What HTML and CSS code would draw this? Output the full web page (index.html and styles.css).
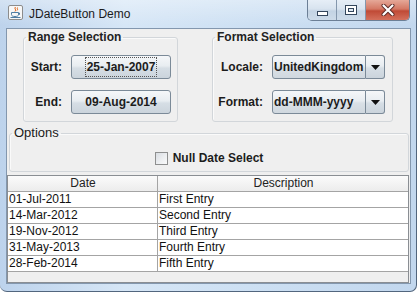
FILE: index.html
```html
<!DOCTYPE html>
<html>
<head>
    <meta charset="utf-8" />
    <title>JDateButton Demo</title>
    <link rel="stylesheet" href="styles.css">
</head>

<body>
    <div class="window">
        <header class="titlebar">
            <svg class="app-icon" width="15" height="15" viewBox="0 0 15 15">
                <rect x="0.5" y="0.5" width="14" height="14" rx="1.5" fill="#f7f7f7" stroke="#8c8c8c"/>
                <path d="M7.5 2 C5.5 3.5 9 4.5 7 6.5" stroke="#e0661a" fill="none"/>
                <path d="M9.5 2.5 C8.5 3.5 10.5 4.5 9 5.5" stroke="#e0661a" fill="none"/>
                <path d="M3.5 7.5 H10.5 V9.5 C10.5 11 9 11.5 7 11.5 C5 11.5 3.5 11 3.5 9.5 Z" fill="none" stroke="#4f7da3"/>
                <path d="M10.5 8 H11.5 V9.5 H10.5" fill="none" stroke="#4f7da3"/>
                <path d="M2.5 12.5 H12.5" stroke="#4f7da3"/>
            </svg>
            <span class="title">JDateButton Demo</span>
            <div class="caption-buttons">
                <div class="cap cap-min">
                    <svg width="11" height="5" viewBox="0 0 11 5"><rect x="0.5" y="0.5" width="10" height="4" fill="#fff" stroke="#34465c"/></svg>
                </div>
                <div class="cap cap-max">
                    <svg width="12" height="10" viewBox="0 0 12 10">
                        <rect x="0.5" y="0.5" width="11" height="9" fill="#fff" stroke="#34465c"/>
                        <rect x="3.5" y="3.5" width="5" height="3" fill="#dfe8f2" stroke="#34465c"/>
                    </svg>
                </div>
                <div class="cap cap-close">
                    <svg width="14" height="12" viewBox="0 0 14 12">
                        <path d="M2.5 1.5 L11.5 10.5 M11.5 1.5 L2.5 10.5" stroke="#5b2a26" stroke-width="4" stroke-linecap="round"/>
                        <path d="M2.5 1.5 L11.5 10.5 M11.5 1.5 L2.5 10.5" stroke="#fff" stroke-width="2.2" stroke-linecap="round"/>
                    </svg>
                </div>
            </div>
        </header>

        <main class="client">
            <div class="top-row">
                <fieldset class="group range-group">
                    <legend>Range Selection</legend>
                    <div class="form-grid">
                        <label>Start:</label>
                        <button class="date-btn"><span class="focus-ring">25-Jan-2007</span></button>
                        <label>End:</label>
                        <button class="date-btn">09-Aug-2014</button>
                    </div>
                </fieldset>
                <fieldset class="group format-group">
                    <legend>Format Selection</legend>
                    <div class="form-grid format-grid">
                        <label>Locale:</label>
                        <div class="combo">
                            <span class="combo-value">UnitedKingdom</span>
                            <span class="combo-arrow"><svg width="9" height="5" viewBox="0 0 9 5"><path d="M0 0 H9 L4.5 5 Z" fill="#111"/></svg></span>
                        </div>
                        <label>Format:</label>
                        <div class="combo">
                            <span class="combo-value">dd-MMM-yyyy</span>
                            <span class="combo-arrow"><svg width="9" height="5" viewBox="0 0 9 5"><path d="M0 0 H9 L4.5 5 Z" fill="#111"/></svg></span>
                        </div>
                    </div>
                </fieldset>
            </div>

            <fieldset class="group options-group">
                <legend>Options</legend>
                <div class="check-row">
                    <span class="checkbox"></span>
                    <span class="check-label">Null Date Select</span>
                </div>
            </fieldset>

            <div class="table-wrap">
                <table class="entries">
                    <thead>
                        <tr><th class="col-date">Date</th><th>Description</th></tr>
                    </thead>
                    <tbody>
                        <tr><td>01-Jul-2011</td><td>First Entry</td></tr>
                        <tr><td>14-Mar-2012</td><td>Second Entry</td></tr>
                        <tr><td>19-Nov-2012</td><td>Third Entry</td></tr>
                        <tr><td>31-May-2013</td><td>Fourth Entry</td></tr>
                        <tr><td>28-Feb-2014</td><td>Fifth Entry</td></tr>
                    </tbody>
                </table>
            </div>
        </main>
    </div>
</body>

</html>
```

FILE: styles.css
```css
body {
    margin: 0;
    padding: 0;
    background: #ffffff;
    font-family: "Liberation Sans", Arial, sans-serif;
}
.window {
    width: 417px;
    height: 292px;
    box-sizing: border-box;
    padding-left: 6px;
    border-right: 1px solid #52667e;
    border-bottom: 1px solid #52667e;
    border-radius: 0 0 7px 7px;
    background: linear-gradient(to right, #bdd3ec 0%, #d6e6f6 30%, #cde0f3 60%, #c2d7ee 100%);
}
.titlebar {
    height: 28px;
    margin-left: -6px;
    padding: 0 6px 0 8px;
    display: flex;
    align-items: flex-start;
    background: linear-gradient(180deg, rgba(255, 255, 255, 0.35), rgba(255, 255, 255, 0) 90%);
}
.app-icon {
    margin-top: 5px;
    flex-shrink: 0;
}
.title {
    margin: 6px 0 0 6px;
    font-size: 12px;
    line-height: 16px;
    color: #1b1b1b;
}
.caption-buttons {
    margin-left: auto;
    display: flex;
    height: 20px;
    border: 1px solid #6c7f96;
    border-top: none;
    border-radius: 0 0 5px 5px;
    overflow: hidden;
}
.cap {
    display: flex;
    align-items: center;
    justify-content: center;
    height: 20px;
}
.cap-min,
.cap-max {
    width: 28px;
    border-right: 1px solid #8497ad;
    background: linear-gradient(180deg, #e6eef7 0%, #d8e3ef 45%, #c3d3e4 55%, #cddbe9 100%);
}
.cap-min svg {
    margin-top: 6px;
}
.cap-close {
    width: 43px;
    background: linear-gradient(180deg, #e5a898 0%, #d47864 45%, #c04a36 55%, #d4705c 100%);
}
.client {
    width: 405px;
    height: 256px;
    box-sizing: border-box;
    border: 1px solid #8397ae;
    background: #efefef;
    display: flex;
    flex-direction: column;
    font-size: 12px;
    color: #1c1c1c;
}
.top-row {
    display: flex;
    gap: 34px;
    margin: 1px 0 0 16px;
}
.group {
    margin: 0;
    padding: 11px 6px 7px 0;
    border: 1px solid #d2d6da;
    border-radius: 3px;
    box-shadow: inset 1px 1px 0 #fafafa;
}
.group legend {
    margin-left: 2px;
    padding: 0 2px;
    font-weight: bold;
    font-size: 12px;
    line-height: 14px;
    color: #222;
}
.range-group {
    width: 155px;
    box-sizing: border-box;
}
.format-group {
    width: 181px;
    box-sizing: border-box;
    padding-right: 7px;
}
.form-grid {
    display: grid;
    grid-template-columns: 38px 100px;
    column-gap: 9px;
    row-gap: 11px;
    align-items: center;
}
.format-grid {
    grid-template-columns: 50px 113px;
}
.form-grid label {
    text-align: right;
    font-weight: bold;
    white-space: nowrap;
}
.date-btn {
    height: 24px;
    padding: 0;
    border: 1px solid #7b8a98;
    border-radius: 3px;
    background: linear-gradient(180deg, #f5f7f9 0%, #e8edf1 45%, #d6dee5 55%, #cbd4dc 100%);
    font-family: "Liberation Sans", Arial, sans-serif;
    font-size: 12px;
    font-weight: bold;
    color: #1c1c1c;
}
.focus-ring {
    display: inline-block;
    padding: 0 1px;
    line-height: 18px;
    border: 1px dotted #555;
}
.combo {
    display: flex;
    height: 24px;
}
.combo-value {
    flex: 1;
    border: 1px solid #7b8a98;
    border-radius: 3px 0 0 3px;
    padding-left: 1px;
    line-height: 22px;
    font-weight: bold;
    white-space: nowrap;
    overflow: hidden;
    background: linear-gradient(180deg, #f5f7f9 0%, #e8edf1 45%, #d9e0e6 55%, #d0d8df 100%);
}
.combo-arrow {
    width: 18px;
    display: flex;
    align-items: center;
    justify-content: center;
    border: 1px solid #7b8a98;
    border-left: none;
    border-radius: 0 3px 3px 0;
    background: linear-gradient(180deg, #f5f7f9 0%, #e8edf1 45%, #d6dee5 55%, #cbd4dc 100%);
}
.options-group {
    margin: 4px 0 0 2px;
    width: 400px;
    box-sizing: border-box;
    padding: 10px 0 5px 0;
}
.options-group legend {
    font-weight: normal;
    font-size: 13px;
    color: #1a1a1a;
}
.check-row {
    display: flex;
    justify-content: center;
    align-items: center;
    gap: 5px;
    height: 16px;
}
.checkbox {
    width: 13px;
    height: 13px;
    box-sizing: border-box;
    border: 1px solid #8e8f8f;
    background: linear-gradient(135deg, #d9dde2 0%, #eef0f2 60%, #fafafa 100%);
}
.check-label {
    font-weight: bold;
    line-height: 16px;
}
.table-wrap {
    flex: 1;
    margin-top: 3px;
    width: 402px;
    box-sizing: border-box;
    border: 1px solid #8a8e93;
    background: #efefef;
}
.entries {
    width: 400px;
    border-collapse: separate;
    border-spacing: 0;
    table-layout: fixed;
    font-size: 12px;
}
.entries th,
.entries td {
    height: 15px;
    padding: 0 0 0 1px;
    line-height: 15px;
    border-right: 1px solid #a4a4a4;
    border-bottom: 1px solid #a4a4a4;
    white-space: nowrap;
    overflow: hidden;
}
.entries th:last-child,
.entries td:last-child {
    border-right: none;
}
.entries th {
    font-weight: normal;
    text-align: center;
    color: #222;
    background: linear-gradient(180deg, #fbfbfb, #ececec);
}
.col-date {
    width: 148px;
}
.entries td {
    background: #fff;
    color: #111;
}
```
